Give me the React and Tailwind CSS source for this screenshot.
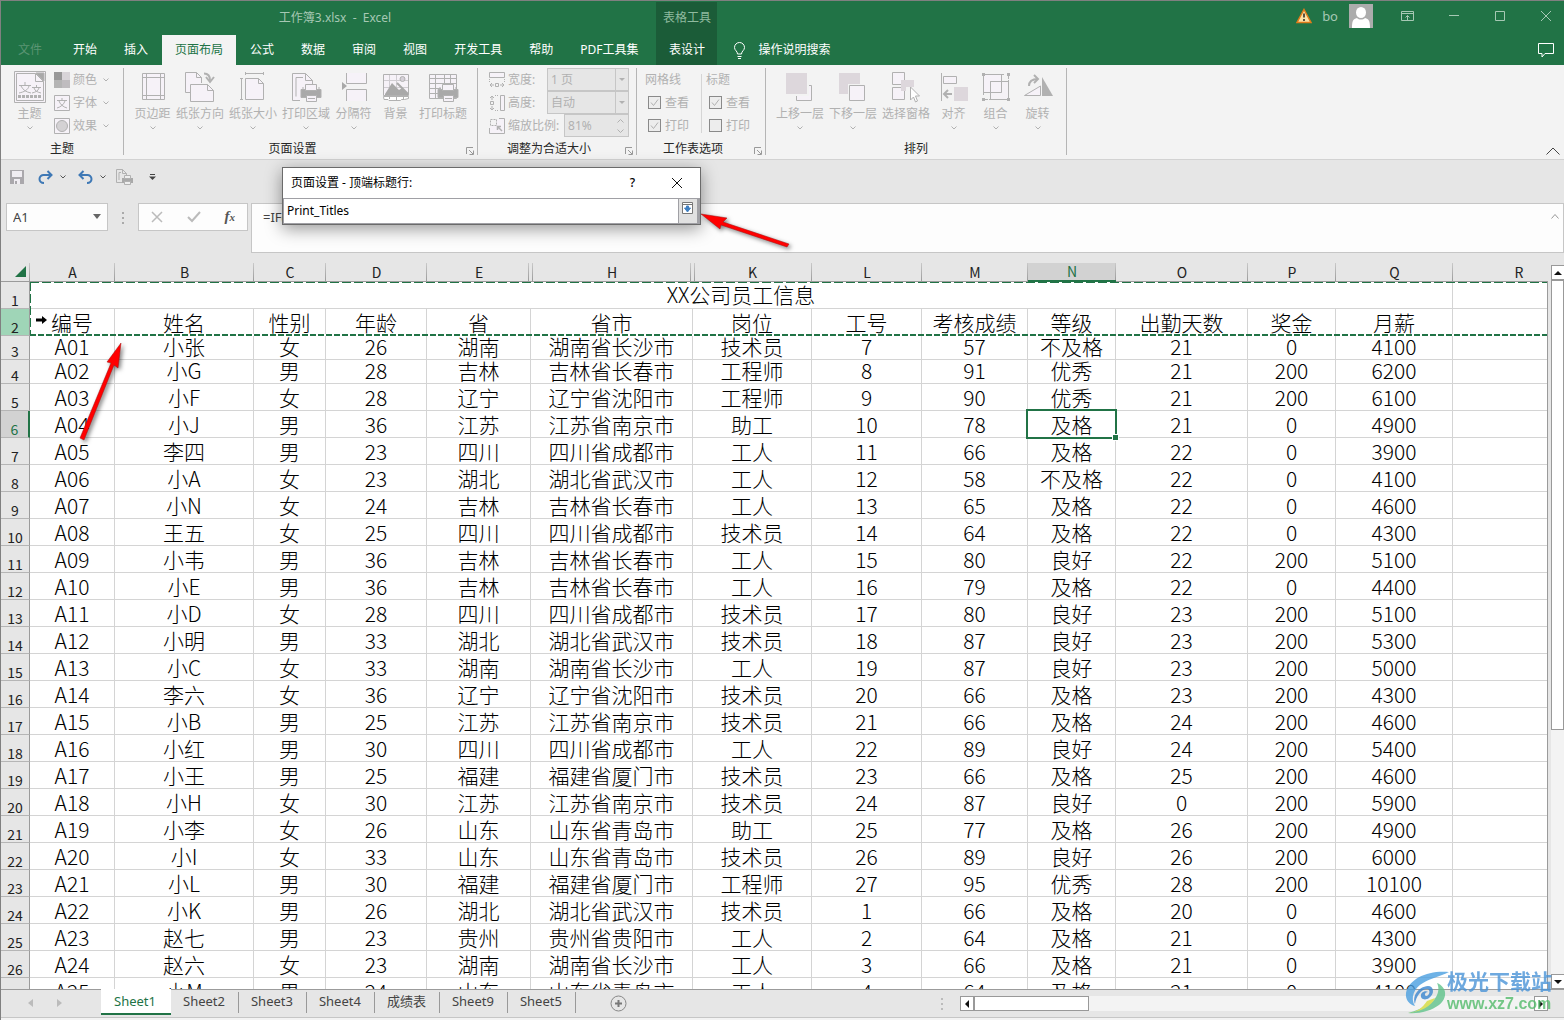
import { useState } from 'react'

const TABS = ['开始', '插入', '页面布局', '公式', '数据', '审阅', '视图', '开发工具', '帮助', 'PDF工具集']
const SHEETS = ['Sheet2', 'Sheet3', 'Sheet4', '成绩表', 'Sheet9', 'Sheet5']

const COLUMNS = [
  { id: 'A', width: 85, title: '编号' },
  { id: 'B', width: 139, title: '姓名' },
  { id: 'C', width: 72, title: '性别' },
  { id: 'D', width: 101, title: '年龄' },
  { id: 'E', width: 104, title: '省', hiddenAfter: true },
  { id: 'H', width: 162, title: '省市', hiddenAfter: true },
  { id: 'K', width: 119, title: '岗位' },
  { id: 'L', width: 110, title: '工号' },
  { id: 'M', width: 106, title: '考核成绩' },
  { id: 'N', width: 88, title: '等级' },
  { id: 'O', width: 132, title: '出勤天数' },
  { id: 'P', width: 88, title: '奖金' },
  { id: 'Q', width: 117, title: '月薪' },
  { id: 'R', width: 132, title: '' },
]

const ROWS = [
  ['A01', '小张', '女', 26, '湖南', '湖南省长沙市', '技术员', 7, 57, '不及格', 21, 0, 4100],
  ['A02', '小G', '男', 28, '吉林', '吉林省长春市', '工程师', 8, 91, '优秀', 21, 200, 6200],
  ['A03', '小F', '女', 28, '辽宁', '辽宁省沈阳市', '工程师', 9, 90, '优秀', 21, 200, 6100],
  ['A04', '小J', '男', 36, '江苏', '江苏省南京市', '助工', 10, 78, '及格', 21, 0, 4900],
  ['A05', '李四', '男', 23, '四川', '四川省成都市', '工人', 11, 66, '及格', 22, 0, 3900],
  ['A06', '小A', '女', 23, '湖北', '湖北省武汉市', '工人', 12, 58, '不及格', 22, 0, 4100],
  ['A07', '小N', '女', 24, '吉林', '吉林省长春市', '工人', 13, 65, '及格', 22, 0, 4600],
  ['A08', '王五', '女', 25, '四川', '四川省成都市', '技术员', 14, 64, '及格', 22, 0, 4300],
  ['A09', '小韦', '男', 36, '吉林', '吉林省长春市', '工人', 15, 80, '良好', 22, 200, 5100],
  ['A10', '小E', '男', 36, '吉林', '吉林省长春市', '工人', 16, 79, '及格', 22, 0, 4400],
  ['A11', '小D', '女', 28, '四川', '四川省成都市', '技术员', 17, 80, '良好', 23, 200, 5100],
  ['A12', '小明', '男', 33, '湖北', '湖北省武汉市', '技术员', 18, 87, '良好', 23, 200, 5300],
  ['A13', '小C', '女', 33, '湖南', '湖南省长沙市', '工人', 19, 87, '良好', 23, 200, 5000],
  ['A14', '李六', '女', 36, '辽宁', '辽宁省沈阳市', '技术员', 20, 66, '及格', 23, 200, 4300],
  ['A15', '小B', '男', 25, '江苏', '江苏省南京市', '技术员', 21, 66, '及格', 24, 200, 4600],
  ['A16', '小红', '男', 30, '四川', '四川省成都市', '工人', 22, 89, '良好', 24, 200, 5400],
  ['A17', '小王', '男', 25, '福建', '福建省厦门市', '技术员', 23, 66, '及格', 25, 200, 4600],
  ['A18', '小H', '女', 30, '江苏', '江苏省南京市', '技术员', 24, 87, '良好', 0, 200, 5900],
  ['A19', '小李', '女', 26, '山东', '山东省青岛市', '助工', 25, 77, '及格', 26, 200, 4900],
  ['A20', '小I', '女', 33, '山东', '山东省青岛市', '技术员', 26, 89, '良好', 26, 200, 6000],
  ['A21', '小L', '男', 30, '福建', '福建省厦门市', '工程师', 27, 95, '优秀', 28, 200, 10100],
  ['A22', '小K', '男', 26, '湖北', '湖北省武汉市', '技术员', 1, 66, '及格', 20, 0, 4600],
  ['A23', '赵七', '男', 23, '贵州', '贵州省贵阳市', '工人', 2, 64, '及格', 21, 0, 4300],
  ['A24', '赵六', '女', 23, '湖南', '湖南省长沙市', '工人', 3, 66, '及格', 21, 0, 3900],
  ['A25', '小M', '男', 24, '山东', '山东省青岛市', '工人', 4, 64, '及格', 21, 0, 4100],
]

function Svg({ w = 32, h = w, children, className = '' }) {
  return (
    <svg width={w} height={h} viewBox={`0 0 ${w} ${h}`} fill="none" stroke="#b1b1b1" className={`shrink-0 ${className}`} aria-hidden="true">
      {children}
    </svg>
  )
}

function Chevron({ className = '' }) {
  return (
    <Svg w={6} h={4} className={className}>
      <path d="M.5 .5 3 3 5.5 .5" stroke="currentColor" />
    </Svg>
  )
}

const PAPER = '#f6f2f8'

const icons = {
  theme: (
    <Svg>
      <path d="M.5 .5h31v31H.5z" fill={PAPER} />
      <path d="M2.5 2.5h19l8 8v19h-27z" />
      <path d="M21.500 2.500v8h8" />
      <path d="M22 2h8v8z" fill="#a9a9a9" />
      <path d="M11 11v3M5 14.500h12M7 15c2 4 5 6 10 7M15 15c-1 4-5 6-10 7" />
      <path d="M22.500 14v2M18 16.500h9M20 17c1 3 3 4 7 5M25 17c-1 3-3 4-7 5" />
      <path d="M4 25.500h24" strokeWidth="3" strokeDasharray="3 1" />
    </Svg>
  ),
  margins: (
    <Svg>
      <path d="M5.500 2.500h22v26h-22z" fill={PAPER} />
      <path d="M9.500 2v27M23.500 2v27M5 6.500h23M5 24.500h23" />
    </Svg>
  ),
  orientation: (
    <Svg>
      <path d="M6 21.500H1.500v-20h11l5 5V12" fill={PAPER} />
      <path d="M12.500 1.500v5h5" />
      <path d="M6.500 13.500h17l6 6v11h-23z" fill={PAPER} />
      <path d="M23.500 13.500v6h6" />
      <path d="M20 2.500c4 0 6 2 6 7" strokeWidth="2" />
      <path d="m22 6 4 5 4-5" strokeWidth="2" />
    </Svg>
  ),
  size: (
    <Svg>
      <path d="M8.500 7.500h13l5 5v16h-18z" fill={PAPER} />
      <path d="M21.500 7.500v5h5M8 2.500h19M8.500 1v3M26.500 1v3M4.500 7v22M3 7.500h3M3 28.500h3" />
    </Svg>
  ),
  printArea: (
    <Svg>
      <path d="M10 29.500H2.500v-27h13l7 7v4" fill={PAPER} />
      <path d="M15.500 2.500v7h7M6 25.500V6.500h7" />
      <path d="M11 18.500h20v8H11z" fill="#a9a9a9" />
      <path d="M15.500 13.500h11v6h-11zM16.500 24.500h10v6h-10z" fill={PAPER} />
      <path d="M18 27.500h7M13 18v-2M29 18v-2" />
    </Svg>
  ),
  breaks: (
    <Svg>
      <path d="M8.500 2v10.500h20V2M8.500 30V18.500h20V30" fill={PAPER} />
      <path d="m4 11 5 4-5 4z" fill="#a9a9a9" stroke="none" />
    </Svg>
  ),
  background: (
    <Svg>
      <path d="M3.500 3.500h25v21h-25z" fill={PAPER} />
      <path d="M9.500 4v20M16.500 4v20M4 9.500h24M4 16.500h24" stroke="#d0cdd2" />
      <circle cx="22.500" cy="8" r="2.500" fill="#d5d0d8" />
      <path d="m5 23 7-11 7 7 3-2 6 6v1H5z" fill="#a9a9a9" stroke="none" />
      <path d="m17 12 11 11" strokeWidth="2" stroke="#a9a9a9" />
      <path d="M3.500 25.500h25v2l-4 1h-3l-1 1H9l-1-1H4z" fill="#fff" />
      <path d="M9.500 25v3M16.500 25v4M23.500 25v3" />
    </Svg>
  ),
  printTitles: (
    <Svg>
      <path d="M2.500 3.500h27v24h-27z" fill={PAPER} />
      <path d="M2 7.500h27M2 12.500h27M2 17.500h12M2 22.500h12M8.500 3v24M17.500 3v9M23.500 3v9" />
      <path d="M11 18.500h20v8H11z" fill="#a9a9a9" />
      <path d="M15.500 13.500h11v6h-11zM16.500 24.500h10v6h-10z" fill={PAPER} />
      <path d="M18 27.500h7M13 18v-2M29 18v-2" />
    </Svg>
  ),
  forward: (
    <Svg>
      <path d="M12.500 24v5.500h15v-15H24" fill={PAPER} />
      <path d="M12 14h13v11H12z" fill="#f3f3f3" stroke="none" />
      <path d="M2 2h21v21H2z" fill="#ddd7dc" stroke="none" />
    </Svg>
  ),
  backward: (
    <Svg>
      <path d="M2 2h21v21H2z" fill="#ddd7dc" stroke="none" />
      <path d="M11 13h18v18H11z" fill="#f3f3f3" stroke="none" />
      <path d="M12.500 14.500h15v15h-15z" fill={PAPER} />
    </Svg>
  ),
  selection: (
    <Svg>
      <path d="M2.500 1.500h12v12h-12zM2.500 16.500h12v12h-12z" fill={PAPER} />
      <path d="M11 9h13v7h-8v4h-5" fill="#ddd7dc" stroke="none" />
      <path d="M20.500 16v13l3-3 2 5 2-1-2-5h4z" fill="#fff" />
    </Svg>
  ),
  align: (
    <Svg>
      <path d="M3.500 2v28M5.500 5.500h13v7h-13z" fill={PAPER} />
      <path d="M16 16h14v14H16z" fill="#ddd7dc" stroke="none" />
      <path d="M14 23H7M10 19l-4 4 4 4" strokeWidth="2" />
    </Svg>
  ),
  group: (
    <Svg>
      <path d="M3.500 3.500h18v18h-18z" fill={PAPER} />
      <path d="M10.500 10.500h18v18h-18z" fill={PAPER} fillOpacity=".6" />
      <path d="M5 3.500h20M5 28.500h20M3.500 5v20M28.500 5v20" strokeDasharray="3 1" />
      <path d="M2 2h3v3H2zM27 2h3v3h-3zM2 27h3v3H2zM27 27h3v3h-3z" fill="#b1b1b1" stroke="none" />
      <path d="M10.500 10.500h11v11h-11z" />
    </Svg>
  ),
  rotate: (
    <Svg>
      <path d="M18.500 15v9.500H2.500z" fill={PAPER} />
      <path d="M20 6v19h11z" fill="#b1b1b1" stroke="none" />
      <path d="M7 15c0-5 3-7 9-7" strokeWidth="2" />
      <path d="m12 4 4 4-4 4" strokeWidth="2" />
    </Svg>
  ),
}

function RibbonButton({ icon, label, arrow = true }) {
  return (
    <button disabled className="flex min-w-[37px] flex-col items-center text-[#b1b1b1]">
      {icons[icon]}
      <span className="mt-[3px] leading-4">{label}</span>
      {arrow && <Chevron className="mt-1" />}
    </button>
  )
}

function Launcher() {
  return (
    <button aria-label="更多选项" className="absolute right-[3px] bottom-0">
      <Svg w={8}>
        <path d="M.5 7V.5H7M3 3l4 4M7.500 3.500v4h-4" stroke="#999" />
      </Svg>
    </button>
  )
}

function RibbonGroup({ title, launcher, className = '', children }) {
  return (
    <section className="mt-[3px] mb-1 flex flex-col border-r border-[#b5b5b5]">
      <div className={`flex-1 ${className}`}>{children}</div>
      <div className={`relative h-4 text-center leading-5 text-[#262626] ${launcher ? 'pr-4' : ''}`}>
        {title}
        {launcher && <Launcher />}
      </div>
    </section>
  )
}

function SmallButton({ icon, label }) {
  return (
    <button disabled className="flex h-[23px] items-center text-[#b1b1b1]">
      {icon}
      <span className="ml-[3px]">{label}</span>
      <Chevron className="ml-1.5" />
    </button>
  )
}

function SizeField({ id, icon, label, children }) {
  return (
    <div className="flex h-[23px] items-center text-[#b1b1b1]">
      {icon}
      <label htmlFor={id} className="mr-auto ml-[3px]">{label}</label>
      {children}
    </div>
  )
}

function SizeSelect({ id, value }) {
  return (
    <div className="relative h-[23px] w-[82px] border border-[#c6c6c6] bg-[#e6e6e6]">
      <select id={id} disabled defaultValue={value} className="h-full w-full appearance-none pl-[3px] opacity-100">
        <option>{value}</option>
      </select>
      <span className="pointer-events-none absolute inset-y-0 right-0 flex w-[13px] items-center justify-center border-l border-[#c6c6c6]">
        <Svg w={6} h={3}><path d="M0 0h6L3 3z" fill="#b1b1b1" stroke="none" /></Svg>
      </span>
    </div>
  )
}

function Tick({ label, checked }) {
  return (
    <label className="flex h-[23px] items-center gap-1 pl-[3px]">
      <span className="relative h-[13px] w-[13px]">
        <input type="checkbox" disabled defaultChecked={checked} className="block h-[13px] w-[13px] appearance-none border border-[#8a8a8a] bg-[#ededed]" />
        {checked && (
          <Svg w={13} className="absolute inset-0"><path d="m3 6.500 2.500 3L10 3.500" /></Svg>
        )}
      </span>
      {label}
    </label>
  )
}

function TitleBar() {
  return (
    <div className="relative flex h-[34px] items-center">
      <div className="w-[43%] pr-1 text-center text-[#a6c8b4]">
        <span className="whitespace-pre">工作簿3.xlsx  -  Excel</span>
      </div>
      <div className="ml-auto flex items-center pr-[9px] pb-1 text-[#a6c8b4]">
        <Svg w={16} className="mr-2.5">
          <path d="M8 1.500 15 14.500H1z" fill="#fbe1a5" stroke="#e07b1a" strokeWidth="1.500" />
          <path d="M8 5.500v4M8 11v2" stroke="#222" strokeWidth="1.500" />
        </Svg>
        <span className="mr-[11px] text-[13px]">bo</span>
        <Svg w={24} className="mr-7">
          <path d="M0 0h24v24H0z" fill="#acacac" stroke="none" />
          <ellipse cx="12" cy="8.500" rx="5" ry="5.500" fill="#fff" stroke="none" />
          <path d="M3 24c0-7 1-9 5-10 2 2 6 2 8 0 4 1 5 3 5 10z" fill="#fff" stroke="none" />
        </Svg>
        <button aria-label="功能区显示选项" className="mr-[35px]">
          <Svg w={13} h={10}><path d="M.5 .5h12v9H.5zM1 2.500h11M6.500 9V4.500M4.500 6.500l2-2 2 2" stroke="#a6c8b4" /></Svg>
        </button>
        <button aria-label="最小化" className="mr-9"><Svg w={10}><path d="M0 4.500h10" stroke="#a6c8b4" /></Svg></button>
        <button aria-label="最大化" className="mr-9"><Svg w={10}><path d="M.5 .5h9v9h-9z" stroke="#a6c8b4" /></Svg></button>
        <button aria-label="关闭" className="pr-1"><Svg w={10}><path d="m0 0 10 10M10 0 0 10" stroke="#a6c8b4" /></Svg></button>
      </div>
    </div>
  )
}

function TabBar() {
  return (
    <nav className="relative flex h-[30px] text-white">
      <button disabled className="mr-[13px] pr-[5px] pl-[17px] text-[#5b9574]">文件</button>
      <div className="mr-[5px] flex gap-px">
        {TABS.map((tab) => (
          <button
            key={tab}
            className={tab === '页面布局' ? 'bg-[#f3f3f3] px-[13px] text-[#217346]' : 'px-[13px]'}
          >
            {tab}
          </button>
        ))}
      </div>
      {/* contextual tab reaches up into the title bar */}
      <div className="relative">
        <div className="absolute inset-x-0 bottom-full h-[33px] bg-[#1b5c38] text-center leading-8 whitespace-nowrap text-[#8fba9f]">表格工具</div>
        <button className="h-full w-[61px] bg-[#1b5c38]">表设计</button>
      </div>
      <button className="ml-4 flex items-center gap-3">
        <Svg w={13} h={17}>
          <path d="M4.500 12c0-3-3-3.500-3-6.500a5 5 0 0 1 10 0c0 3-3 3.500-3 6.500zM4.500 14.500h4M5 16.500h3" stroke="#fff" />
        </Svg>
        操作说明搜索
      </button>
      <button aria-label="批注" className="mr-2.5 ml-auto">
        <Svg w={16} h={15}><path d="M.5 .5h15v10H7L4 14v-3.500H.5z" stroke="#fff" /></Svg>
      </button>
    </nav>
  )
}

function Ribbon() {
  return (
    <div className="relative flex h-[95px] border-b border-[#d2d2d2] bg-[#f3f3f3] text-[#b1b1b1]">
      <RibbonGroup title="主题" className="flex gap-1.5 pr-3.5 pl-2.5">
        <div className="pt-[3px]"><RibbonButton icon="theme" label="主题" /></div>
        <div>
          <SmallButton label="颜色" icon={
            <Svg w={16}>
              <path d="M0 0h8v8H0z" fill="#989898" stroke="none" />
              <path d="M8 0h8v8H8z" fill="#d8d4d8" stroke="none" />
              <path d="M0 8h8v8H0z" fill="#b4b4b4" stroke="none" />
              <path d="M8 8h8v8H8z" fill="#bfbcbf" stroke="none" />
            </Svg>} />
          <SmallButton label="字体" icon={
            <Svg w={16}>
              <path d="M.5 .5h15v15H.5z" fill={PAPER} />
              <path d="M8 3v2M3 5.500h10M5 6c1 3 4 6 8 7M11 6c-1 3-4 6-8 7" />
            </Svg>} />
          <SmallButton label="效果" icon={
            <Svg w={16}>
              <path d="M.5 .5h15v15H.5z" fill={PAPER} />
              <circle cx="8" cy="8" r="5.500" fill="#d4d2d4" />
            </Svg>} />
        </div>
      </RibbonGroup>

      <RibbonGroup title="页面设置" launcher className="flex items-start gap-[5px] px-2.5 pt-[3px]">
        <RibbonButton icon="margins" label="页边距" />
        <RibbonButton icon="orientation" label="纸张方向" />
        <RibbonButton icon="size" label="纸张大小" />
        <RibbonButton icon="printArea" label="打印区域" />
        <RibbonButton icon="breaks" label="分隔符" />
        <RibbonButton icon="background" label="背景" arrow={false} />
        <RibbonButton icon="printTitles" label="打印标题" arrow={false} />
      </RibbonGroup>

      <RibbonGroup title="调整为合适大小" launcher className="w-[158px] pr-[7px] pl-[11px]">
        <SizeField id="fit-width" label="宽度:" icon={
          <Svg w={16}>
            <path d="M.5 .5h15v5H.5z" fill={PAPER} />
            <path d="M.5 7v3M15.500 7v3" strokeDasharray="1 1" />
            <path d="M6.500 11.500h3v3h-3zM5 13H1M3 11l-2 2 2 2M11 13h4M13 11l2 2-2 2" />
          </Svg>}>
          <SizeSelect id="fit-width" value="1 页" />
        </SizeField>
        <SizeField id="fit-height" label="高度:" icon={
          <Svg w={16}>
            <path d="M11.500 .5h4v15h-4z" fill={PAPER} />
            <path d="M6 .5h4M6 15.500h4" strokeDasharray="1 1" />
            <path d="M1.500 6.500h3v3h-3zM3 5V1M1 3l2-2 2 2M3 11v4M1 13l2 2 2-2" />
          </Svg>}>
          <SizeSelect id="fit-height" value="自动" />
        </SizeField>
        <SizeField id="fit-scale" label="缩放比例:" icon={
          <Svg w={16}>
            <path d="M10 .5h5.500v15H.5V10" fill={PAPER} />
            <path d="M1.500 1.500h6v6h-6z" fill="#f3f3f3" strokeDasharray="2 1" />
            <path d="m13 13-4-4M8.500 12V8.500H12" strokeWidth="1.500" />
          </Svg>}>
          <div className="flex h-[23px] w-[65px] items-center border border-[#c6c6c6] bg-[#e6e6e6] pr-1">
            <input id="fit-scale" disabled defaultValue="81%" className="w-0 flex-1 pl-[3px]" />
            <Svg w={7} h={14}><path d="m.5 3.500 3-3 3 3M.5 10.500l3 3 3-3" /></Svg>
          </div>
        </SizeField>
      </RibbonGroup>

      <RibbonGroup title="工作表选项" launcher className="flex pr-[11px] pl-2">
        <div className="w-[56px]">
          <div className="flex h-[23px] items-center">网格线</div>
          <Tick label="查看" checked />
          <Tick label="打印" checked />
        </div>
        <div className="my-1.5 mr-1 border-l border-[#d5d5d5]" />
        <div className="w-12">
          <div className="flex h-[23px] items-center">标题</div>
          <Tick label="查看" checked />
          <Tick label="打印" />
        </div>
      </RibbonGroup>

      <RibbonGroup title="排列" className="flex items-start gap-[5px] px-2.5 pt-[3px]">
        <RibbonButton icon="forward" label="上移一层" />
        <RibbonButton icon="backward" label="下移一层" />
        <RibbonButton icon="selection" label="选择窗格" arrow={false} />
        <RibbonButton icon="align" label="对齐" />
        <RibbonButton icon="group" label="组合" />
        <RibbonButton icon="rotate" label="旋转" />
      </RibbonGroup>

      <button aria-label="折叠功能区" className="mr-1 mb-1 ml-auto self-end">
        <Svg w={14} h={8}><path d="m.5 7.500 6.500-6.500 6.500 6.500" stroke="#444" /></Svg>
      </button>
    </div>
  )
}

function QuickAccess() {
  return (
    <div className="flex h-[34px] items-center pl-[9px] text-[#555]">
      <button aria-label="保存" className="mr-3.5">
        <Svg w={14}>
          <path d="M0 0h14v14H0z" fill="#aaa8ac" stroke="none" />
          <path d="M2 1h10v6H2zM4 9h6v5H4z" fill="#f0edf2" stroke="none" />
          <path d="M5 11h2v3H5z" fill="#aaa8ac" stroke="none" />
        </Svg>
      </button>
      <button aria-label="恢复" className="mr-[7px]">
        <Svg w={15} h={14}><path d="M13 5H6a4 4 0 0 0-4.500 4c0 2 1.500 4 4.500 4M9.500 1l4 4-4 4" stroke="#3e78b5" strokeWidth="2" /></Svg>
      </button>
      <Chevron className="mr-3" />
      <button aria-label="撤消" className="mr-[7px]">
        <Svg w={15} h={14}><path d="M2 5h7a4 4 0 0 1 4.500 4c0 2-1.500 4-4.500 4M5.500 1l-4 4 4 4" stroke="#3e78b5" strokeWidth="2" /></Svg>
      </button>
      <Chevron className="mr-2.5" />
      <button aria-label="打印预览" className="mr-4">
        <Svg w={17}>
          <path d="M6 13.500H.5V.5h6l4 4V7M6.500 .5v4h4M3 11V3.500h2" />
          <path d="M6 9h11v5H6z" fill="#a9a9a9" stroke="none" />
          <path d="M8.500 6.500h6v3h-6zM8.500 12.500h6v3h-6z" fill="#eee" />
        </Svg>
      </button>
      <button aria-label="自定义快速访问工具栏">
        <Svg w={7} h={6}><path d="M1 .5h5" stroke="#444" /><path d="M0 2.500h7L3.500 6z" fill="#444" stroke="none" /></Svg>
      </button>
    </div>
  )
}

function FormulaBar() {
  return (
    <div className="mt-[9px] flex h-[50px] items-start">
      <div className="relative ml-[5px] h-7 w-[102px] border border-[#c6c6c6] bg-[#fdfdfd]">
        <input aria-label="名称框" defaultValue="A1" className="h-full w-full pl-1.5 text-[13px] text-[#444]" />
        <Svg w={8} h={5} className="absolute top-[10px] right-1.5"><path d="M0 0h8L4 5z" fill="#666" stroke="none" /></Svg>
      </div>
      <Svg w={30} h={28}><path d="M14 9h2v2h-2zM14 14h2v2h-2zM14 19h2v2h-2z" fill="#aaa" stroke="none" /></Svg>
      <div className="mr-[3px] flex h-7 w-[110px] items-center justify-between border border-[#c6c6c6] bg-[#fdfdfd] px-3">
        <button disabled aria-label="取消"><Svg w={12}><path d="m1 1 10 10M11 1 1 11" stroke="#bbb" strokeWidth="1.500" /></Svg></button>
        <button disabled aria-label="输入"><Svg w={14} h={12}><path d="m1 6 4 4 8-9" stroke="#bbb" strokeWidth="2" /></Svg></button>
        <button aria-label="插入函数" className="pb-0.5 font-['Liberation_Serif',serif] text-[15px] font-bold italic text-[#555]">
          f<span className="text-[11px]">x</span>
        </button>
      </div>
      <div className="flex h-[50px] flex-1 items-start border border-[#c6c6c6] bg-[#fdfdfd]">
        <input aria-label="编辑栏" defaultValue="=IF(" className="h-[26px] flex-1 pl-[11px] text-[13px] text-[#444]" />
        <Svg w={8} h={5} className="mt-2.5 mr-1"><path d="m.5 4.500 3.500-4 3.500 4" stroke="#999" /></Svg>
      </div>
    </div>
  )
}

const LINE = 'w-px bg-gradient-to-b from-[#c9c9c9] to-[#9b9b9b]'

function ColumnHeader({ column }) {
  const active = column.id === 'N'
  return (
    <th
      className={`relative h-[19px] p-0 text-center text-[14px] leading-[17px] font-normal ${
        active ? 'border-b-2 border-[#217346] bg-[#d2d2d2] text-[#217346]' : 'border-b border-[#9b9b9b] text-[#222]'
      }`}
    >
      {column.id}
      {column.hiddenAfter && <span className={`absolute inset-y-0 -right-[2px] ${LINE}`} />}
      <span className={`absolute inset-y-0 ${column.hiddenAfter ? 'right-[2px]' : 'right-0'} ${LINE}`} />
    </th>
  )
}

function RowHeader({ n }) {
  const tone =
    n === 2 ? 'bg-[#9fd5b7] border-r border-r-[#9b9b9b] text-[#222]'
    : n === 6 ? 'bg-[#d2d2d2] border-r-2 border-r-[#217346] text-[#217346]'
    : 'bg-[#e6e6e6] border-r border-r-[#9b9b9b] text-[#222]'
  return (
    <th className={`border-b border-b-[#b5b5b5] p-0 text-center align-bottom text-[14px] leading-[15px] font-normal ${tone}`}>{n}</th>
  )
}

function Cell({ children, selected }) {
  return (
    <td className="relative border-r border-b border-[#d4d4d4] p-0 pb-0.5 text-center align-bottom leading-[21px] whitespace-nowrap">
      {children}
      {selected && (
        <span className="absolute -inset-0.5 z-10 border-2 border-[#217346]">
          <span className="absolute -right-[4px] -bottom-[4px] h-[7px] w-[7px] border border-white bg-[#217346]" />
        </span>
      )}
    </td>
  )
}

function Grid() {
  return (
    <div className="relative flex-1 overflow-hidden">
      <table className="w-[1584px] table-fixed border-separate border-spacing-0 font-['Noto_Sans_CJK_SC',sans-serif] font-light text-black">
        <colgroup>
          <col className="w-[29px]" />
          {COLUMNS.map((c) => <col key={c.id} style={{ width: c.width }} />)}
        </colgroup>
        <thead>
          <tr>
            <th className="relative border-b border-[#9b9b9b] p-0" aria-label="全选">
              <Svg w={11} className="absolute right-1 bottom-1"><path d="M11 0v11H0z" fill="#217346" stroke="none" /></Svg>
              <span className={`absolute inset-y-0 right-0 ${LINE}`} />
            </th>
            {COLUMNS.map((c) => <ColumnHeader key={c.id} column={c} />)}
          </tr>
        </thead>
        <tbody className="bg-white text-[21px]">
          <tr className="h-[27px]">
            <RowHeader n={1} />
            <td colSpan={13} className="border-r border-b border-[#d4d4d4] p-0 pb-[3px] text-center align-bottom leading-[21px]">XX公司员工信息</td>
            <Cell />
          </tr>
          <tr className="h-[27px]">
            <RowHeader n={2} />
            {COLUMNS.map((c) => <Cell key={c.id}>{c.title}</Cell>)}
          </tr>
          {ROWS.map((row, i) => (
            <tr key={row[0]} className={i < 2 ? 'h-6' : 'h-[27px]'}>
              <RowHeader n={i + 3} />
              {row.map((value, j) => <Cell key={j} selected={i === 3 && j === 9}>{value}</Cell>)}
              <Cell />
            </tr>
          ))}
        </tbody>
      </table>

      {/* marching ants round rows 1 and 2 */}
      <svg className="pointer-events-none absolute top-[18px] left-[29px] h-14 w-full" fill="none" stroke="#217346" aria-hidden="true">
        <path d="M0 1.500H1600M.5 1V54" stroke="#fff" />
        <path d="M0 1.500H1600" strokeDasharray="9 3" />
        <path d="M.5 1V54" strokeDasharray="9 3" />
        <path d="M0 54H1600" strokeWidth="2" stroke="#fff" />
        <path d="M0 54H1600" strokeWidth="2" strokeDasharray="6 2" />
      </svg>
      <Svg w={11} h={8} className="pointer-events-none absolute top-[53px] left-[35px]">
        <path d="M0 2.500h6V0l5 4-5 4V5.500H0z" fill="#000" stroke="none" />
      </Svg>
      <div className="absolute top-[19px] right-0 bottom-0 w-px bg-[#9b9b9b]" />
    </div>
  )
}

function ScrollButton({ label, d, className = '' }) {
  return (
    <button aria-label={label} className={`flex h-[15px] w-[14px] shrink-0 items-center justify-center border border-[#999] bg-white ${className}`}>
      <Svg w={8}><path d={d} fill="#111" stroke="none" /></Svg>
    </button>
  )
}

function VerticalScroll() {
  return (
    <div className="mt-0.5 ml-[3px] flex w-[13px] flex-col bg-[#f3f3f3]">
      <ScrollButton label="向上滚动" d="M0 6h8L4 2z" />
      <div className="h-[450px] border border-[#999] bg-white" />
      <ScrollButton label="向下滚动" d="M0 2h8L4 6z" className="mt-auto" />
    </div>
  )
}

function SheetBar({ sheet, onSelect }) {
  return (
    <footer className="flex h-[29px] shrink-0 items-start border-t border-b border-t-[#9b9b9b] border-b-[#c6c6c6] text-[13px] text-[#444]">
      <div className="flex h-[26px] w-[100px] items-center gap-6 pl-[27px]">
        <Svg w={5} h={8}><path d="M5 0v8L0 4z" fill="#bbb" stroke="none" /></Svg>
        <Svg w={5} h={8}><path d="M0 0v8l5-4z" fill="#bbb" stroke="none" /></Svg>
      </div>
      {['Sheet1', ...SHEETS].map((name) => (
        <button
          key={name}
          onClick={() => onSelect(name)}
          className={
            name === sheet
              ? '-mt-px h-[26px] w-[70px] border-b-2 border-[#217346] bg-white pr-0.5 text-[#217346]'
              : 'mt-0.5 h-[21px] border-r border-[#999] pr-[13px] pl-3 pb-[3px] leading-[18px]'
          }
        >
          {name}
        </button>
      ))}
      <button aria-label="新工作表" className="mt-[5px] ml-[34px]">
        <Svg w={17}><circle cx="8.500" cy="8.500" r="7.500" stroke="#888" /><path d="M8.500 5v7M5 8.500h7" stroke="#777" strokeWidth="2" /></Svg>
      </button>
      <div className="mt-1.5 mr-4 ml-auto flex w-[39%] items-center pl-0.5">
        <Svg w={16} h={15} className="mr-1"><path d="M1 2h2v2H1zM1 7h2v2H1zM1 12h2v2H1z" fill="#bbb" stroke="none" /></Svg>
        <ScrollButton label="向左滚动" d="M6 0v8L2 4z" />
        <div className="flex h-[15px] flex-1 bg-[#f3f3f3]">
          <div className="w-[115px] border border-[#999] bg-white" />
        </div>
        <ScrollButton label="向右滚动" d="M2 0v8l4-4z" />
      </div>
    </footer>
  )
}

function RefDialog() {
  return (
    <div role="dialog" aria-label="页面设置 - 顶端标题行" className="absolute top-[166px] left-[281px] w-[419px] border border-[#6b6b6b] bg-white text-black shadow-[0_4px_16px_rgba(0,0,0,0.4)]">
      <div className="flex h-[30px] items-center pr-[17px] pl-2">
        <span>页面设置 - 顶端标题行:</span>
        <button className="mr-9 ml-auto font-medium">?</button>
        <button aria-label="关闭"><Svg w={12}><path d="m1 1 10 10M11 1 1 11" stroke="#111" /></Svg></button>
      </div>
      <div className="flex h-[26px] border border-[#a0a0a5]">
        <input aria-label="顶端标题行" defaultValue="Print_Titles" className="min-w-0 flex-1 pl-[3px]" />
        <button aria-label="展开对话框" className="flex w-[21px] justify-center border-r-2 border-l border-[#a0a0a5] bg-[#e1e1e1] pt-[3px]">
          <Svg w={12} h={13}>
            <path d="M.5 .5h10v11H.5zM1 2.500h9" fill="#fff" stroke="#777" />
            <path d="M4.500 4h2v2h2L5.500 10l-3-4h2z" fill="#3f7fc1" stroke="#3f7fc1" />
          </Svg>
        </button>
      </div>
    </div>
  )
}

function Annotations() {
  return (
    <svg className="pointer-events-none absolute -top-px -left-px h-full w-full drop-shadow-[2px_2px_2px_rgba(0,0,0,0.5)]" aria-hidden="true">
      <g fill="#f00" stroke="#a01010" strokeWidth=".5">
        <path d="M701 214 727 218 723 222 789 244 787 247 721 225 720 229Z" />
        <path d="M121 343 118 368 114 365 84 440 80 438 111 363 107 362Z" />
      </g>
    </svg>
  )
}

function Watermark() {
  return (
    <div className="pointer-events-none absolute right-3 bottom-[6px] flex items-end opacity-80">
      <svg width="46" height="44" viewBox="0 0 46 44" aria-hidden="true">
        <path d="M44 2C24 0 4 8 1 23c-1 7 4 12 9 13-5-8-1-18 8-23C26 8 36 6 44 2z" fill="#4b9fe0" />
        <path d="M32 13c10 4 11 15 2 22-8 6-20 9-31 8 14-4 24-9 28-16 3-5 3-10 1-14z" fill="#5fc28a" />
        <path d="M3 43c10-1 14-5 19-12l8-3c-3 8-15 14-27 15z" fill="#d7dc3c" />
        <path d="M10 34c-3-8 3-17 13-18 6 0 7 8 1 12-4 3-9 1-8-3 0-3 5-5 7-3-3 0-4 3-2 4 3 0 5-5 2-7-6-1-12 7-13 15z" fill="#3b86cf" />
      </svg>
      <div className="-ml-1">
        <div className="text-[21px] leading-[23px] font-bold text-[#4a94d8]">极光下载站</div>
        <div className="font-['Liberation_Sans',sans-serif] text-[16px] leading-[21px] font-bold text-[#54bb6c]">www.xz7.com</div>
      </div>
    </div>
  )
}

export default function App() {
  const [sheet, setSheet] = useState('Sheet1')

  return (
    <div className="relative flex h-screen flex-col overflow-hidden border-t border-l border-[#808080] bg-[#e6e6e6] font-['Noto_Sans','Noto_Sans_CJK_SC',sans-serif] text-[12px] leading-4">
      <header className="bg-[#217346]">
        <TitleBar />
        <TabBar />
      </header>
      <Ribbon />
      <QuickAccess />
      <FormulaBar />
      <main className="mt-[10px] flex min-h-0 flex-1">
        <Grid />
        <VerticalScroll />
      </main>
      <SheetBar sheet={sheet} onSelect={setSheet} />
      <div className="h-0.5 shrink-0 bg-[#f3f3f3]" />
      <RefDialog />
      <Annotations />
      <Watermark />
    </div>
  )
}
